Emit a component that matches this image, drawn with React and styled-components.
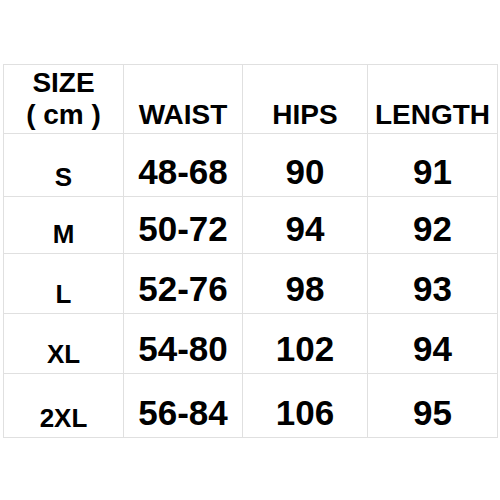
import React from "react";
import styled, { createGlobalStyle } from "styled-components";

const Global = createGlobalStyle`
  html, body { margin: 0; padding: 0; background: #fff; }
  body { font-family: "Liberation Sans", Arial, sans-serif; }
`;

const Page = styled.div`
  width: 500px;
  height: 500px;
  background: #fff;
  padding: 64px 0 0 3px;
  box-sizing: border-box;
`;

const Grid = styled.div`
  display: grid;
  grid-template-columns: 120px 119px 125px 130px;
  grid-template-rows: 69px 63px 57px 60px 60px 64px;
  border-left: 1px solid #e0e0e0;
  border-top: 1px solid #e0e0e0;
  width: max-content;
`;

const Cell = styled.div`
  box-sizing: content-box;
  border-right: 1px solid #e0e0e0;
  border-bottom: 1px solid #e0e0e0;
  display: flex;
  flex-direction: column;
  justify-content: flex-end;
  align-items: center;
  text-align: center;
  color: #000;
  font-weight: bold;
  white-space: nowrap;
`;

const HeadCell = styled(Cell)`
  font-size: 28px;
  line-height: 32px;
  padding-bottom: 2px;
  height: calc(100% - 3px);
`;

const BodyCell = styled(Cell)`
  font-size: ${(p) => (p.$label ? "26px" : "35px")};
  line-height: 1;
  padding-bottom: ${(p) => (p.$label ? "6px" : "7px")};
  height: calc(100% - ${(p) => (p.$label ? "7px" : "8px")});
`;

const rows = [
  ["S", "48-68", "90", "91"],
  ["M", "50-72", "94", "92"],
  ["L", "52-76", "98", "93"],
  ["XL", "54-80", "102", "94"],
  ["2XL", "56-84", "106", "95"],
];

export default function App() {
  return (
    <>
      <Global />
      <Page>
        <Grid>
          <HeadCell>
            <span>SIZE</span>
            <span>( cm )</span>
          </HeadCell>
          <HeadCell>WAIST</HeadCell>
          <HeadCell>HIPS</HeadCell>
          <HeadCell>LENGTH</HeadCell>
          {rows.map((r) =>
            r.map((v, i) => (
              <BodyCell key={r[0] + i} $label={i === 0}>
                {v}
              </BodyCell>
            ))
          )}
        </Grid>
      </Page>
    </>
  );
}
